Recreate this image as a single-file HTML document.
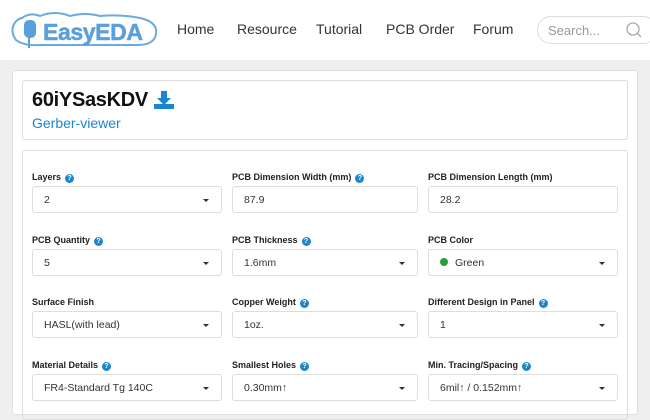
<!DOCTYPE html>
<html><head><style>
*{box-sizing:border-box;margin:0;padding:0}
body{width:650px;height:408px;overflow:hidden;background:#efefef;font-family:"Liberation Sans",sans-serif;position:relative}
.hdr{position:absolute;left:0;top:0;width:650px;height:60px;background:#fff}
.nav{position:absolute;top:21px;font-size:14px;color:#333}
.search{position:absolute;left:537px;top:16px;width:120px;height:28px;border:1px solid #ddd;border-radius:14px;background:#fff;color:#999;font-size:13px;padding:6px 10px}
.card{position:absolute;left:12px;top:70px;width:626px;height:345px;background:#fff;border:1px solid #e0e0e0;border-radius:3px}
.title{position:absolute;left:22px;top:80px;width:606px;height:60px;border:1px solid #ddd;border-radius:3px}
.form{position:absolute;left:22px;top:150px;width:606px;height:270px;border:1px solid #ddd;border-radius:3px}
.lbl{position:absolute;font-size:9px;font-weight:bold;color:#222}
.q{display:inline-block;width:9px;height:9px;border-radius:50%;background:#1a86d0;color:#fff;font-size:7px;text-align:center;line-height:9px;margin-left:4px;vertical-align:0}
.in{position:absolute;height:27px;border:1px solid #ddd;border-radius:3px;font-size:10.5px;color:#333;padding:7px 11px;background:#fff}
.in.s:after{content:"";position:absolute;right:12px;top:12px;border-left:3.5px solid transparent;border-right:3.5px solid transparent;border-top:3.5px solid #333}
</style></head><body>
<div class="hdr">
<svg style="position:absolute;left:10px;top:10px" width="150" height="42" viewBox="0 0 150 42">
<path d="M12 8 Q20 2 30 6 Q45 0 60 6 Q75 2 90 6 Q110 4 130 8 Q148 12 146 24 Q144 35 128 35 L30 35 Q14 36 6 30 Q0 22 4 14 Q7 9 12 8Z" fill="#fff" stroke="#6aaae0" stroke-width="2"/>
<rect x="14" y="10" width="12" height="18" rx="5" fill="#5a9fdc"/><rect x="18" y="28" width="2" height="10" fill="#5a9fdc"/>
<text x="33" y="30" font-family="Liberation Sans" font-weight="bold" font-size="23" fill="#5a9fdc" stroke="#5a9fdc" stroke-width="0.5" textLength="100">EasyEDA</text>
</svg>
<div class="nav" style="left:177px">Home</div>
<div class="nav" style="left:237px">Resource</div>
<div class="nav" style="left:316px">Tutorial</div>
<div class="nav" style="left:386px">PCB Order</div>
<div class="nav" style="left:473px">Forum</div>
<div class="search">Search...<svg style="position:absolute;left:88px;top:5px" width="16" height="16"><circle cx="7" cy="7" r="6" fill="none" stroke="#aaa" stroke-width="1.3"/><path d="M11 11l4 4" stroke="#aaa" stroke-width="1.3"/></svg></div>
</div>
<div class="card"></div>
<div class="title">
<div style="position:absolute;left:9px;top:8px;font-size:20px;font-weight:bold;color:#111;letter-spacing:-0.3px">60iYSasKDV</div>
<svg style="position:absolute;left:131px;top:10px" width="20" height="18"><path d="M7 0h6v7h4l-7 7-7-7h4z" fill="#1a86d0"/><rect x="0" y="13" width="20" height="5" fill="#1a86d0"/></svg>
<div style="position:absolute;left:9px;top:34px;font-size:14px;color:#1a86d0">Gerber-viewer</div>
</div>
<div class="form"></div>
<div class="lbl" style="left:32px;top:172px">Layers<span class="q">?</span></div>
<div class="lbl" style="left:232px;top:172px">PCB Dimension Width (mm)<span class="q">?</span></div>
<div class="lbl" style="left:428px;top:172px">PCB Dimension Length (mm)</div>
<div class="in s" style="left:32px;top:186px;width:190px">2</div>
<div class="in" style="left:232px;top:186px;width:186px">87.9</div>
<div class="in" style="left:428px;top:186px;width:190px">28.2</div>
<div class="lbl" style="left:32px;top:235px">PCB Quantity<span class="q">?</span></div>
<div class="lbl" style="left:232px;top:235px">PCB Thickness<span class="q">?</span></div>
<div class="lbl" style="left:428px;top:235px">PCB Color</div>
<div class="in s" style="left:32px;top:249px;width:190px">5</div>
<div class="in s" style="left:232px;top:249px;width:186px">1.6mm</div>
<div class="in s" style="left:428px;top:249px;width:190px"><span style="display:inline-block;width:8px;height:8px;border-radius:50%;background:#2a9d3a;margin-right:7px"></span>Green</div>
<div class="lbl" style="left:32px;top:297px">Surface Finish</div>
<div class="lbl" style="left:232px;top:297px">Copper Weight<span class="q">?</span></div>
<div class="lbl" style="left:428px;top:297px">Different Design in Panel<span class="q">?</span></div>
<div class="in s" style="left:32px;top:311px;width:190px">HASL(with lead)</div>
<div class="in s" style="left:232px;top:311px;width:186px">1oz.</div>
<div class="in s" style="left:428px;top:311px;width:190px">1</div>
<div class="lbl" style="left:32px;top:360px">Material Details<span class="q">?</span></div>
<div class="lbl" style="left:232px;top:360px">Smallest Holes<span class="q">?</span></div>
<div class="lbl" style="left:428px;top:360px">Min. Tracing/Spacing<span class="q">?</span></div>
<div class="in s" style="left:32px;top:374px;width:190px">FR4-Standard Tg 140C</div>
<div class="in s" style="left:232px;top:374px;width:186px">0.30mm↑</div>
<div class="in s" style="left:428px;top:374px;width:190px">6mil↑ / 0.152mm↑</div>
</body></html>
